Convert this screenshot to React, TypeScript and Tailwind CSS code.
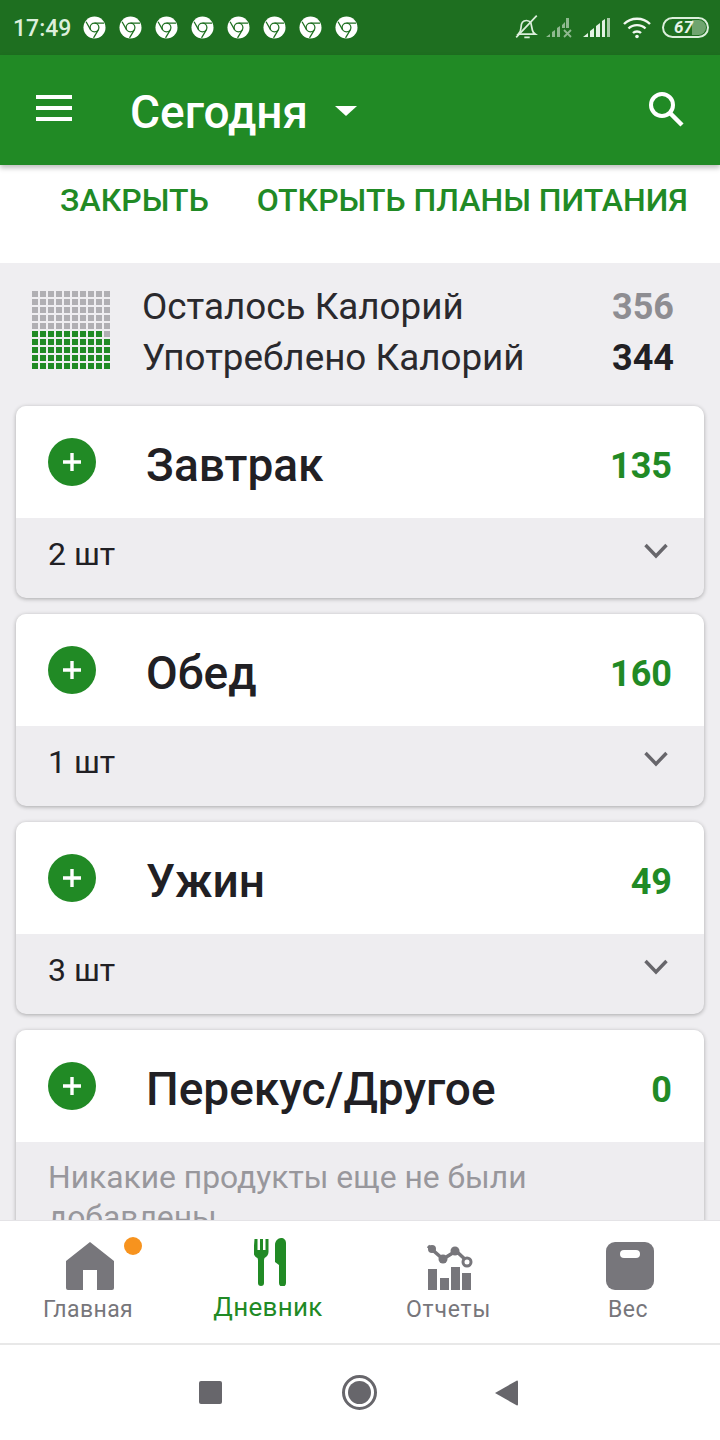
const meals = [
  { name: "Завтрак", kcal: "135", count: "2 шт" },
  { name: "Обед", kcal: "160", count: "1 шт" },
  { name: "Ужин", kcal: "49", count: "3 шт" },
];

function ChromeIcon() {
  return (
    <svg viewBox="0 0 24 24" className="w-[23px] h-[23px]">
      <circle cx="12" cy="12" r="11.5" fill="#fff" />
      <circle cx="12" cy="12" r="4.6" fill="none" stroke="#1e6f20" strokeWidth="1.3" />
      <path d="M12 7.4H22M8 14.5L3.2 6M16 14.5L11 22.8" stroke="#1e6f20" strokeWidth="1.3" fill="none" />
    </svg>
  );
}

function StatusBar() {
  return (
    <div className="h-[55px] shrink-0 bg-[#1e6f20] flex items-center pl-[13px] pr-[11px]">
      <span className="text-[23px] font-medium text-[#dcefdc] w-[70px] mt-[3px]">17:49</span>
      <div className="flex gap-[13px]">
        {[0, 1, 2, 3, 4, 5, 6, 7].map((i) => (
          <ChromeIcon key={i} />
        ))}
      </div>
      <div className="ml-auto flex items-center">
        {/* bell off */}
        <svg viewBox="0 0 24 24" className="w-[26px] h-[26px] mr-[6px] -mt-[1px]" fill="none" stroke="#dcefdc" strokeWidth="1.6">
          <path d="M4 18.5c1.500-1.500 2.500-3 2.500-6 0-4 2-6.500 5-6.500 1.500 0 3 .6 4 2l1.500 7c.3 1.500 1 2.500 2.500 3.500z" />
          <path d="M9.500 21.500h5M2 21.500L21 1.500" />
        </svg>
        {/* sim 1, no service */}
        <svg viewBox="0 0 28 22" className="w-[28px] h-[22px] mr-[9px]" fill="#8fb98f">
          <path d="M0 20l4-3v3zM6 15l3-2v7H6zM11 11l3-2v11h-3zM20 1h3v10h-3zM16 8l3-3v6h-3z" />
          <path d="M18 13l7 7M25 13l-7 7" stroke="#8fb98f" strokeWidth="1.800" />
        </svg>
        {/* sim 2 */}
        <svg viewBox="0 0 28 22" className="w-[28px] h-[22px] mr-[11px]" fill="#e4f2e4">
          <path d="M0 20l5-4v4zM7 14l4-3v9H7zM13 9l4-3v14h-4z" />
          <path d="M19 4l3-2v18h-3z" />
          <path d="M24 1h3v19h-3z" fill="#a8cca8" />
        </svg>
        {/* wifi */}
        <svg viewBox="0 0 32 24" className="w-[32px] h-[24px] mr-[8px]" fill="none" stroke="#f1f8f1" strokeWidth="2.400">
          <path d="M2 8c7-7 19-7 26 0M6.500 12.500c4.500-4.500 12.500-4.500 17 0M11 17c2-2 6-2 8 0" />
          <circle cx="15" cy="20.500" r="1.800" fill="#f1f8f1" stroke="none" />
        </svg>
        {/* battery */}
        <div className="relative w-[47px] h-[21px] rounded-full border-2 border-[#dcefdc] flex items-center justify-center overflow-hidden">
          <div className="absolute right-[1px] top-[1px] bottom-[1px] w-[14px] rounded-r-full bg-[#6fa46f]" />
          <span className="relative text-[17px] leading-none font-bold italic text-[#e8f4e8] pr-[4px]">67</span>
        </div>
      </div>
    </div>
  );
}

function Header() {
  return (
    <div className="h-[110px] shrink-0 bg-[#218a25] flex items-center relative z-10 shadow-[0_3px_5px_rgba(0,0,0,0.25)]">
      <div className="ml-[36px] w-[36px] flex flex-col gap-[7px] -mt-[4px]">
        <div className="h-[4px] bg-white" />
        <div className="h-[4px] bg-white" />
        <div className="h-[4px] bg-white" />
      </div>
      <span className="ml-[58px] text-[46px] font-medium text-white leading-none mt-[3px]">Сегодня</span>
      <div className="ml-[27px] mt-[2px] w-0 h-0 border-l-[11px] border-r-[11px] border-t-[10px] border-l-transparent border-r-transparent border-t-white" />
      <svg viewBox="0 0 36 36" className="ml-auto mr-[36px] w-[36px] h-[36px] -mt-[2px]" fill="none" stroke="#fff">
        <circle cx="14" cy="14" r="11" strokeWidth="4" />
        <path d="M22 22l12 12" strokeWidth="4.500" />
      </svg>
    </div>
  );
}

function Waffle() {
  const cells: boolean[] = [];
  for (let i = 0; i < 100; i++) cells.push(i >= 50 && i !== 59);
  return (
    <div className="grid grid-cols-[repeat(10,6px)] gap-[2px] w-[78px]">
      {cells.map((green, i) => (
        <div key={i} className={green ? "h-[6px] bg-[#218a25]" : "h-[6px] bg-[#b0afb3]"} />
      ))}
    </div>
  );
}

function PlusButton() {
  return (
    <div className="mt-[32px] w-[48px] h-[48px] rounded-full bg-[#218a25] flex items-center justify-center shrink-0">
      <svg viewBox="0 0 20 20" className="w-[20px] h-[20px]" stroke="#fff" strokeWidth="3.400">
        <path d="M10 1v18M1 10h18" />
      </svg>
    </div>
  );
}

function MealCard({ name, kcal, count }: { name: string; kcal: string; count: string }) {
  return (
    <div className="rounded-[10px] overflow-hidden bg-[#eeedf0] shadow-[0_1px_4px_rgba(0,0,0,0.3)]">
      <div className="h-[112px] bg-white flex items-start pl-[32px] pr-[32px]">
        <PlusButton />
        <span className="ml-[50px] mt-[32px] text-[46px] leading-[54px] font-medium text-[#212024]">{name}</span>
        <span className="ml-auto mt-[38px] text-[36px] leading-[44px] font-bold text-[#218a25]">{kcal}</span>
      </div>
      <div className="h-[80px] flex items-start pl-[32px] pr-[36px]">
        <span className="mt-[16px] text-[32px] leading-[40px] text-[#212024]">{count}</span>
        <svg viewBox="0 0 24 16" className="ml-auto mt-[25px] w-[24px] h-[16px]" fill="none" stroke="#67666b" strokeWidth="3.400">
          <path d="M1.500 2L12 13L22.500 2" />
        </svg>
      </div>
    </div>
  );
}

function TabBar() {
  return (
    <div className="h-[125px] shrink-0 bg-white border-t border-[#e4e3e6] border-b-2 border-b-[#e8e8e8] grid grid-cols-4 relative z-10">
      <div className="flex flex-col items-center relative">
        <svg viewBox="0 0 48 48" className="mt-[21px] w-[48px] h-[48px]" fill="#77767b">
          <path d="M24 0L48 19v27a2 2 0 0 1-2 2H31V28H17v20H2a2 2 0 0 1-2-2V19z" />
        </svg>
        <div className="absolute left-[124px] top-[16px] w-[18px] h-[18px] rounded-full bg-[#f7931e]" />
        <span className="mt-[5px] mr-[4px] text-[23px] leading-[30px] text-[#77767b] tracking-[0.4px]">Главная</span>
      </div>
      <div className="flex flex-col items-center">
        <svg viewBox="0 0 32 48" className="mt-[17px] w-[32px] h-[48px]" fill="#218a25">
          <path d="M0 1h3v11h2.500V1h3v11h2.500V1h3v13c0 3-2 5-4 6l-.5 2v23a3 3 0 0 1-6 0V22l-.5-2c-2-1-4-3-4-6z" transform="translate(.5 0)" />
          <path d="M21 24V7c0-4 3-7 6-7 3 0 5 2 5 5v40a3.500 3.500 0 0 1-7 0V27z" />
        </svg>
        <span className="mt-[5px] mr-[4px] text-[26px] leading-[32px] text-[#218a25] tracking-[0.3px]">Дневник</span>
      </div>
      <div className="flex flex-col items-center">
        <svg viewBox="0 0 48 48" className="mt-[21px] w-[48px] h-[48px]" fill="#77767b">
          <path d="M2 4L17 17L30 9L42 20" fill="none" stroke="#77767b" strokeWidth="3.500" />
          <circle cx="6" cy="7" r="4" />
          <circle cx="17" cy="17" r="4.500" />
          <circle cx="29" cy="9" r="4.500" />
          <circle cx="41" cy="20" r="4" fill="#fff" stroke="#77767b" strokeWidth="3" />
          <path d="M2 27h9v21H2zM14 36h9v12h-9zM25 25h9v23h-9zM36 31h9v17h-9z" />
        </svg>
        <span className="mt-[5px] mr-[3px] text-[23px] leading-[30px] text-[#77767b] tracking-[0.8px]">Отчеты</span>
      </div>
      <div className="flex flex-col items-center">
        <div className="mt-[21px] w-[48px] h-[48px] rounded-[9px] bg-[#77767b] flex justify-center">
          <div className="mt-[8px] w-[20px] h-[8px] rounded-full bg-white" />
        </div>
        <span className="mt-[5px] mr-[4px] text-[23px] leading-[30px] text-[#77767b] tracking-[0.4px]">Вес</span>
      </div>
    </div>
  );
}

function SystemNav() {
  return (
    <div className="h-[95px] shrink-0 bg-white flex items-center pl-[199px]">
      <div className="w-[23px] h-[23px] rounded-[2px] bg-[#67666b]" />
      <div className="ml-[120px] w-[35px] h-[35px] rounded-full border-[3px] border-[#67666b] flex items-center justify-center">
        <div className="w-[23px] h-[23px] rounded-full bg-[#67666b]" />
      </div>
      <svg viewBox="0 0 23 26" className="ml-[118px] w-[23px] h-[26px]" fill="#67666b">
        <path d="M0 13L22 0.500a1 1 0 0 1 1 1v23a1 1 0 0 1-1 1z" />
      </svg>
    </div>
  );
}

export default function App() {
  return (
    <div className="w-[720px] h-[1440px] overflow-hidden flex flex-col bg-white font-['Roboto',sans-serif]">
      <StatusBar />
      <Header />

      {/* Meal plan promo */}
      <div className="h-[98px] shrink-0 bg-white flex items-start pt-[16px] pl-[60px] text-[32px] leading-[38px] font-medium text-[#218a25]">
        <span>ЗАКРЫТЬ</span>
        <span className="ml-[48px]">ОТКРЫТЬ ПЛАНЫ ПИТАНИЯ</span>
      </div>

      {/* Diary */}
      <div className="flex-1 min-h-0 overflow-hidden bg-[#efeef1]">
        <div className="h-[143px] flex items-start pt-[28px] pl-[32px] pr-[46px]">
          <Waffle />
          <div className="ml-[32px] -mt-[10px] text-[36.8px] leading-[51px] text-[#2a292d]">
            <div>Осталось Калорий</div>
            <div>Употреблено Калорий</div>
          </div>
          <div className="ml-auto -mt-[9px] text-right text-[36px] leading-[51px] font-bold">
            <div className="text-[#8e8d92]">356</div>
            <div className="text-[#212024]">344</div>
          </div>
        </div>

        <div className="px-[16px] flex flex-col gap-[16px]">
          {meals.map((m) => (
            <MealCard key={m.name} name={m.name} kcal={m.kcal} count={m.count} />
          ))}
          <div className="rounded-[10px] overflow-hidden bg-[#eeedf0] shadow-[0_1px_4px_rgba(0,0,0,0.3)]">
            <div className="h-[112px] bg-white flex items-start pl-[32px] pr-[32px]">
              <PlusButton />
              <span className="ml-[50px] mt-[32px] text-[46px] leading-[54px] font-medium text-[#212024]">Перекус/Другое</span>
              <span className="ml-auto mt-[38px] text-[36px] leading-[44px] font-bold text-[#218a25]">0</span>
            </div>
            <div className="pl-[32px] pr-[32px] pt-[15px] pb-[20px] text-[31.8px] leading-[40px] text-[#98979c]">
              Никакие продукты еще не были добавлены
            </div>
          </div>
        </div>
      </div>

      <TabBar />
      <SystemNav />
    </div>
  );
}
